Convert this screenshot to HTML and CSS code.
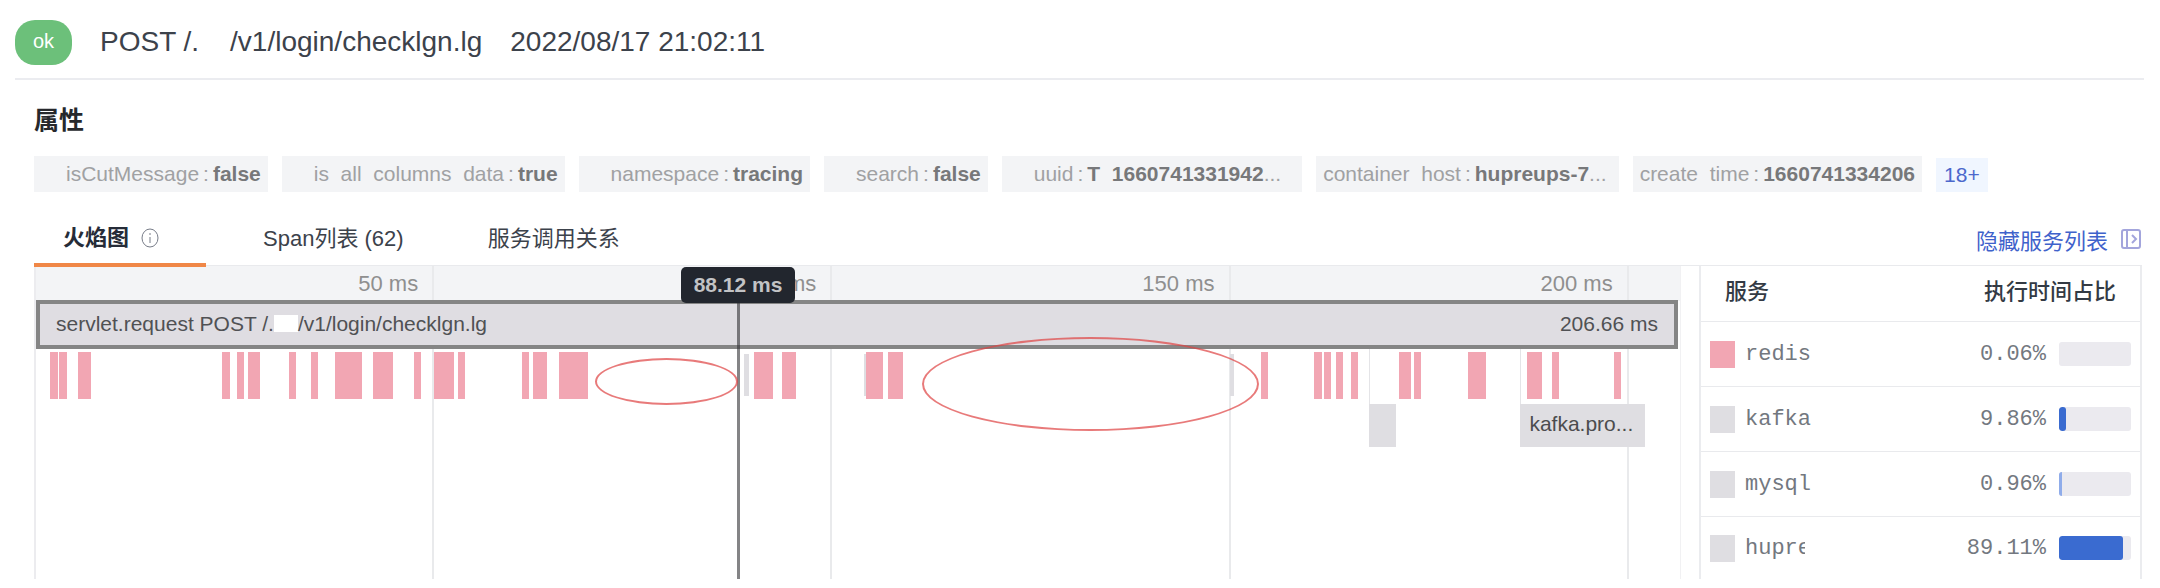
FILE: index.html
```html
<!DOCTYPE html>
<html lang="zh-CN">

<head>
    <meta charset="UTF-8">
    <title>Trace</title>
    <link rel="stylesheet" href="styles.css">
</head>

<body>
    <header class="trace-header">
        <span class="status">ok</span>
        <h1 class="trace-title">POST /.<span class="blank"></span>/v1/login/checklgn.lg</h1>
        <time class="trace-time">2022/08/17 21:02:11</time>
    </header>

    <main class="trace-body">
        <h2 class="section-title">属性</h2>
        <div class="tags">
            <span class="tag tag-icon"><span>isCutMessage</span><i>:</i><b>false</b></span>
            <span class="tag tag-icon"><span>is  all  columns  data</span><i>:</i><b>true</b></span>
            <span class="tag tag-icon"><span>namespace</span><i>:</i><b>tracing</b></span>
            <span class="tag tag-icon"><span>search</span><i>:</i><b>false</b></span>
            <span class="tag tag-icon tag-cut"><span>uuid</span><i>:</i><b>T  1660741331942</b>...</span>
            <span class="tag tag-cut"><span>container  host</span><i>:</i><b>hupreups-7</b>...</span>
            <span class="tag"><span>create  time</span><i>:</i><b>1660741334206</b></span>
            <button type="button" class="more">18+</button>
        </div>

        <nav class="tabs">
            <button type="button" class="tab active">火焰图
                <svg class="info" viewBox="0 0 18 20" fill="none" stroke="currentColor">
                    <ellipse cx="9" cy="10" rx="8" ry="9" />
                    <path d="M9 9v6M9 5v2" />
                </svg>
            </button>
            <button type="button" class="tab">Span列表 (62)</button>
            <button type="button" class="tab">服务调用关系</button>
            <button type="button" class="toggle">隐藏服务列表
                <svg class="panel-icon" viewBox="0 0 22 20" fill="none" stroke="currentColor" stroke-width="2">
                    <rect x="2" y="1" width="18" height="18" rx="2" />
                    <path d="M7 1v18M12 6l4 4-4 4" />
                </svg>
            </button>
        </nav>

        <div class="content">
            <section class="flame">
                <div class="grid">
                    <div class="tick">50 ms</div>
                    <div class="tick">100 ms</div>
                    <div class="tick">150 ms</div>
                    <div class="tick">200 ms</div>
                    <div class="tick last"></div>
                </div>
                <div class="root-span">
                    <span>servlet.request POST /.<span class="blank"></span>/v1/login/checklgn.lg</span>
                    <span>206.66 ms</span>
                </div>
                <div class="row" id="row1"></div>
                <div class="row" id="row2"></div>
                <div class="cursor">
                    <span class="cursor-label">88.12 ms</span>
                </div>
                <div class="mark mark-small"></div>
                <div class="mark mark-large"></div>
            </section>

            <table class="services">
                <thead>
                    <tr>
                        <th>服务</th>
                        <th class="ratio">执行时间占比</th>
                    </tr>
                </thead>
                <tbody>
                    <tr>
                        <td><div class="service"><i class="swatch pink"></i>redis</div></td>
                        <td><div class="percent">0.06%<span class="bar"><span class="fill" style="width: 0.06%"></span></span></div></td>
                    </tr>
                    <tr>
                        <td><div class="service"><i class="swatch"></i>kafka</div></td>
                        <td><div class="percent">9.86%<span class="bar"><span class="fill" style="width: 9.86%"></span></span></div></td>
                    </tr>
                    <tr>
                        <td><div class="service"><i class="swatch"></i>mysql</div></td>
                        <td><div class="percent">0.96%<span class="bar"><span class="fill thin" style="width: 0.96%"></span></span></div></td>
                    </tr>
                    <tr>
                        <td><div class="service"><i class="swatch"></i><span class="cut">hupre</span></div></td>
                        <td><div class="percent">89.11%<span class="bar"><span class="fill" style="width: 89.11%"></span></span></div></td>
                    </tr>
                </tbody>
            </table>
        </div>
    </main>
    <script src="flame.js"></script>
</body>

</html>
```

FILE: styles.css
```css
body {
    margin: 0;
    background-color: #fff;
    color: #3c424b;
    font-family: "Liberation Sans", "Noto Sans CJK SC", sans-serif;
    font-size: 22px;
}

button {
    border: none;
    background: none;
    padding: 0;
    color: inherit;
    font-family: inherit;
    font-size: inherit;
    cursor: pointer;
}

/* header */
.trace-header {
    display: flex;
    align-items: center;
    height: 58px;
    margin: 0 16px 0 15px;
    padding-top: 20px;
    border-bottom: 2px solid #ebecf0;
}

.status {
    width: 57px;
    height: 45px;
    margin-bottom: 13px;
    border-radius: 20px;
    background-color: #6cc07a;
    color: #fff;
    font-size: 20px;
    line-height: 43px;
    text-align: center;
}

.trace-title,
.trace-time {
    margin: 0 0 14px 28px;
    font-size: 28px;
    font-weight: normal;
    line-height: 36px;
}

.blank {
    display: inline-block;
    width: 31px;
}

.trace-body {
    margin: 0 18px 0 34px;
}

.section-title {
    margin: 0;
    padding: 22px 0 18px;
    color: #26282c;
    font-size: 25px;
    font-weight: bold;
    line-height: 36px;
}

/* attribute tags */
.tags {
    display: flex;
    gap: 14px;
    font-size: 21px;
}

.tag {
    padding: 0 7px;
    background-color: #f3f4f6;
    color: #a0a1a3;
    line-height: 36px;
    white-space: pre;
}

.tag-icon {
    padding-left: 32px;
}

.tag-cut {
    padding-right: 12px;
}

.tag-icon.tag-cut {
    padding-right: 21px;
}

.tag i {
    padding: 0 4px;
    font-style: normal;
}

.tag b {
    color: #77787a;
}

.more {
    padding: 0 8px;
    margin-top: 2px;
    background-color: #f0f6ff;
    color: #4c68cc;
}

/* tabs */
.tabs {
    display: flex;
    height: 52px;
    margin-top: 21px;
}

.tab {
    padding: 0 42px;
    line-height: 52px;
}

.tab.active {
    position: relative;
    z-index: 1;
    display: flex;
    align-items: center;
    gap: 12px;
    margin-right: 15px;
    padding: 0 47px 0 29px;
    border-bottom: 4px solid #f08747;
    height: 54px;
    box-sizing: border-box;
    color: #262c38;
    font-weight: bold;
}

.info {
    width: 18px;
    height: 20px;
    color: #777c88;
}

.toggle {
    display: flex;
    align-items: center;
    gap: 12px;
    margin-left: auto;
    color: #3f62cb;
}

.panel-icon {
    width: 22px;
    height: 20px;
    color: #a3a5dc;
}

.content {
    display: grid;
    grid-template-columns: 1fr 443px;
    gap: 18px;
    border-top: 1px solid #e9eaed;
}

/* flame graph */
.flame {
    position: relative;
    height: 313px;
    border-left: 2px solid #ececef;
    border-right: 1px solid #f1f1f3;
}

.grid {
    position: absolute;
    inset: 0;
    display: flex;
    background: linear-gradient(#f3f4f6 35px, transparent 35px);
}

.tick {
    box-sizing: border-box;
    width: 24.22%;
    padding-right: 14px;
    border-right: 2px solid #e9eaec;
    color: #8f8f8f;
    line-height: 36px;
    text-align: right;
}

.tick.last {
    width: auto;
    border: none;
}

.root-span {
    position: relative;
    display: flex;
    justify-content: space-between;
    box-sizing: border-box;
    height: 49px;
    margin: 34px 2px 0 0;
    padding: 0 16px;
    border: 4px solid #858585;
    background-color: #dfdde2;
    color: #505154;
    font-size: 21px;
    line-height: 40px;
}

.root-span .blank {
    width: 24px;
    height: 17px;
    background-color: #fff;
    vertical-align: -1px;
}

.row {
    position: relative;
    height: 47px;
    margin-top: 3px;
}

.row + .row {
    margin-top: 5px;
}

.span {
    position: absolute;
    top: 0;
    height: 47px;
    background-color: #f2a6b3;
}

.span.grey {
    top: 2px;
    height: 42px;
    background-color: #dfdee2;
}

.span.child {
    top: 0;
    height: 43px;
    box-sizing: border-box;
    padding-left: 9px;
    color: #4c4c4e;
    font-size: 21px;
    line-height: 40px;
    white-space: nowrap;
}

/* thin line that ties a child to the root span */
.link {
    position: absolute;
    top: -55px;
    width: 1px;
    height: 55px;
    background-color: #e4e4e7;
}

.cursor {
    position: absolute;
    top: 1px;
    bottom: 0;
    left: 42.64%;
    width: 3px;
    background-color: rgba(50, 50, 54, 0.6);
}

.cursor-label {
    position: absolute;
    left: -56px;
    width: 114px;
    border-radius: 5px;
    background-color: #22262e;
    color: #c2c3c5;
    font-size: 21px;
    font-weight: bold;
    line-height: 36px;
    text-align: center;
}

.mark {
    position: absolute;
    box-sizing: border-box;
    border: 2px solid rgba(222, 66, 66, 0.7);
    border-radius: 50%;
}

.mark-small {
    top: 92px;
    left: 34%;
    width: 8.7%;
    height: 47px;
}

.mark-large {
    top: 71px;
    left: 53.9%;
    width: 20.5%;
    height: 94px;
}

/* services */
.services {
    box-sizing: border-box;
    border: 2px solid #ebecef;
    border-width: 0 2px;
    border-spacing: 0;
    color: #737880;
    font-family: "Liberation Mono", "Noto Sans CJK SC", monospace;
}

.services th {
    height: 55px;
    padding: 0 24px;
    color: #333a44;
    font-weight: 500;
    line-height: 32px;
    text-align: left;
}

.services th.ratio {
    text-align: right;
}

.services th,
.services td {
    border-bottom: 1px solid #e9eaed;
}

.services td {
    height: 64px;
    padding: 0 9px;
}

.services tr:last-child td {
    height: 62px;
    border-bottom: none;
}

.service,
.percent {
    display: flex;
    align-items: center;
}

.service {
    gap: 10px;
}

.percent {
    justify-content: flex-end;
    gap: 13px;
}

.swatch {
    width: 25px;
    height: 27px;
    background-color: #dfdee2;
}

.swatch.pink {
    background-color: #f2a6b3;
}

.cut {
    width: 60px;
    overflow: hidden;
}

.bar {
    width: 72px;
    height: 24px;
    overflow: hidden;
    border-radius: 3px;
    background-color: #ebeaef;
}

.fill {
    display: block;
    height: 100%;
    border-radius: 3px;
    background-color: #3a6bd0;
}

.fill.thin {
    min-width: 3px;
    border-radius: 0;
    background-color: #8facea;
}
```

FILE: flame.js
```js
var total = 206.66;

// [start ms, duration ms, type]
var spans = [
    [1.82, 0.9], [2.95, 0.9], [5.34, 1.57], [23.43, 0.9], [25.25, 0.9], [26.63, 1.57],
    [31.78, 0.9], [34.55, 0.9], [37.56, 3.39], [42.34, 2.51], [47.49, 0.9], [50, 2.51],
    [53.02, 0.9], [61.06, 0.9], [62.44, 1.76], [65.7, 3.64], [88.94, 0.63, 'grey'],
    [90.2, 2.39], [93.72, 1.76], [104.1, 0.3, 'grey'], [104.33, 2.1], [107.16, 1.82],
    [150.1, 0.5, 'grey'], [154, 0.9], [160.7, 0.9], [161.93, 0.9], [163.44, 0.9],
    [165.33, 0.9], [171.36, 1.5], [173.2, 0.9], [179.96, 2.26], [187.44, 1.88],
    [190.6, 0.9], [198.4, 0.9]
];

var children = [
    [167.6, 3.3, 'grey child', ''],
    [186.6, 15.7, 'grey child', 'kafka.pro...']
];

function addSpan(row, span) {
    var el = document.createElement('div');
    el.className = 'span ' + (span[2] || '');
    el.style.left = span[0] / total * 100 + '%';
    el.style.width = span[1] / total * 100 + '%';
    el.textContent = span[3] || '';
    row.appendChild(el);
}

var row1 = document.getElementById('row1');
var row2 = document.getElementById('row2');

spans.forEach(function (span) {
    addSpan(row1, span);
});

children.forEach(function (span) {
    addSpan(row2, span);
    var link = document.createElement('div');
    link.className = 'link';
    link.style.left = span[0] / total * 100 + '%';
    row2.appendChild(link);
});
```
